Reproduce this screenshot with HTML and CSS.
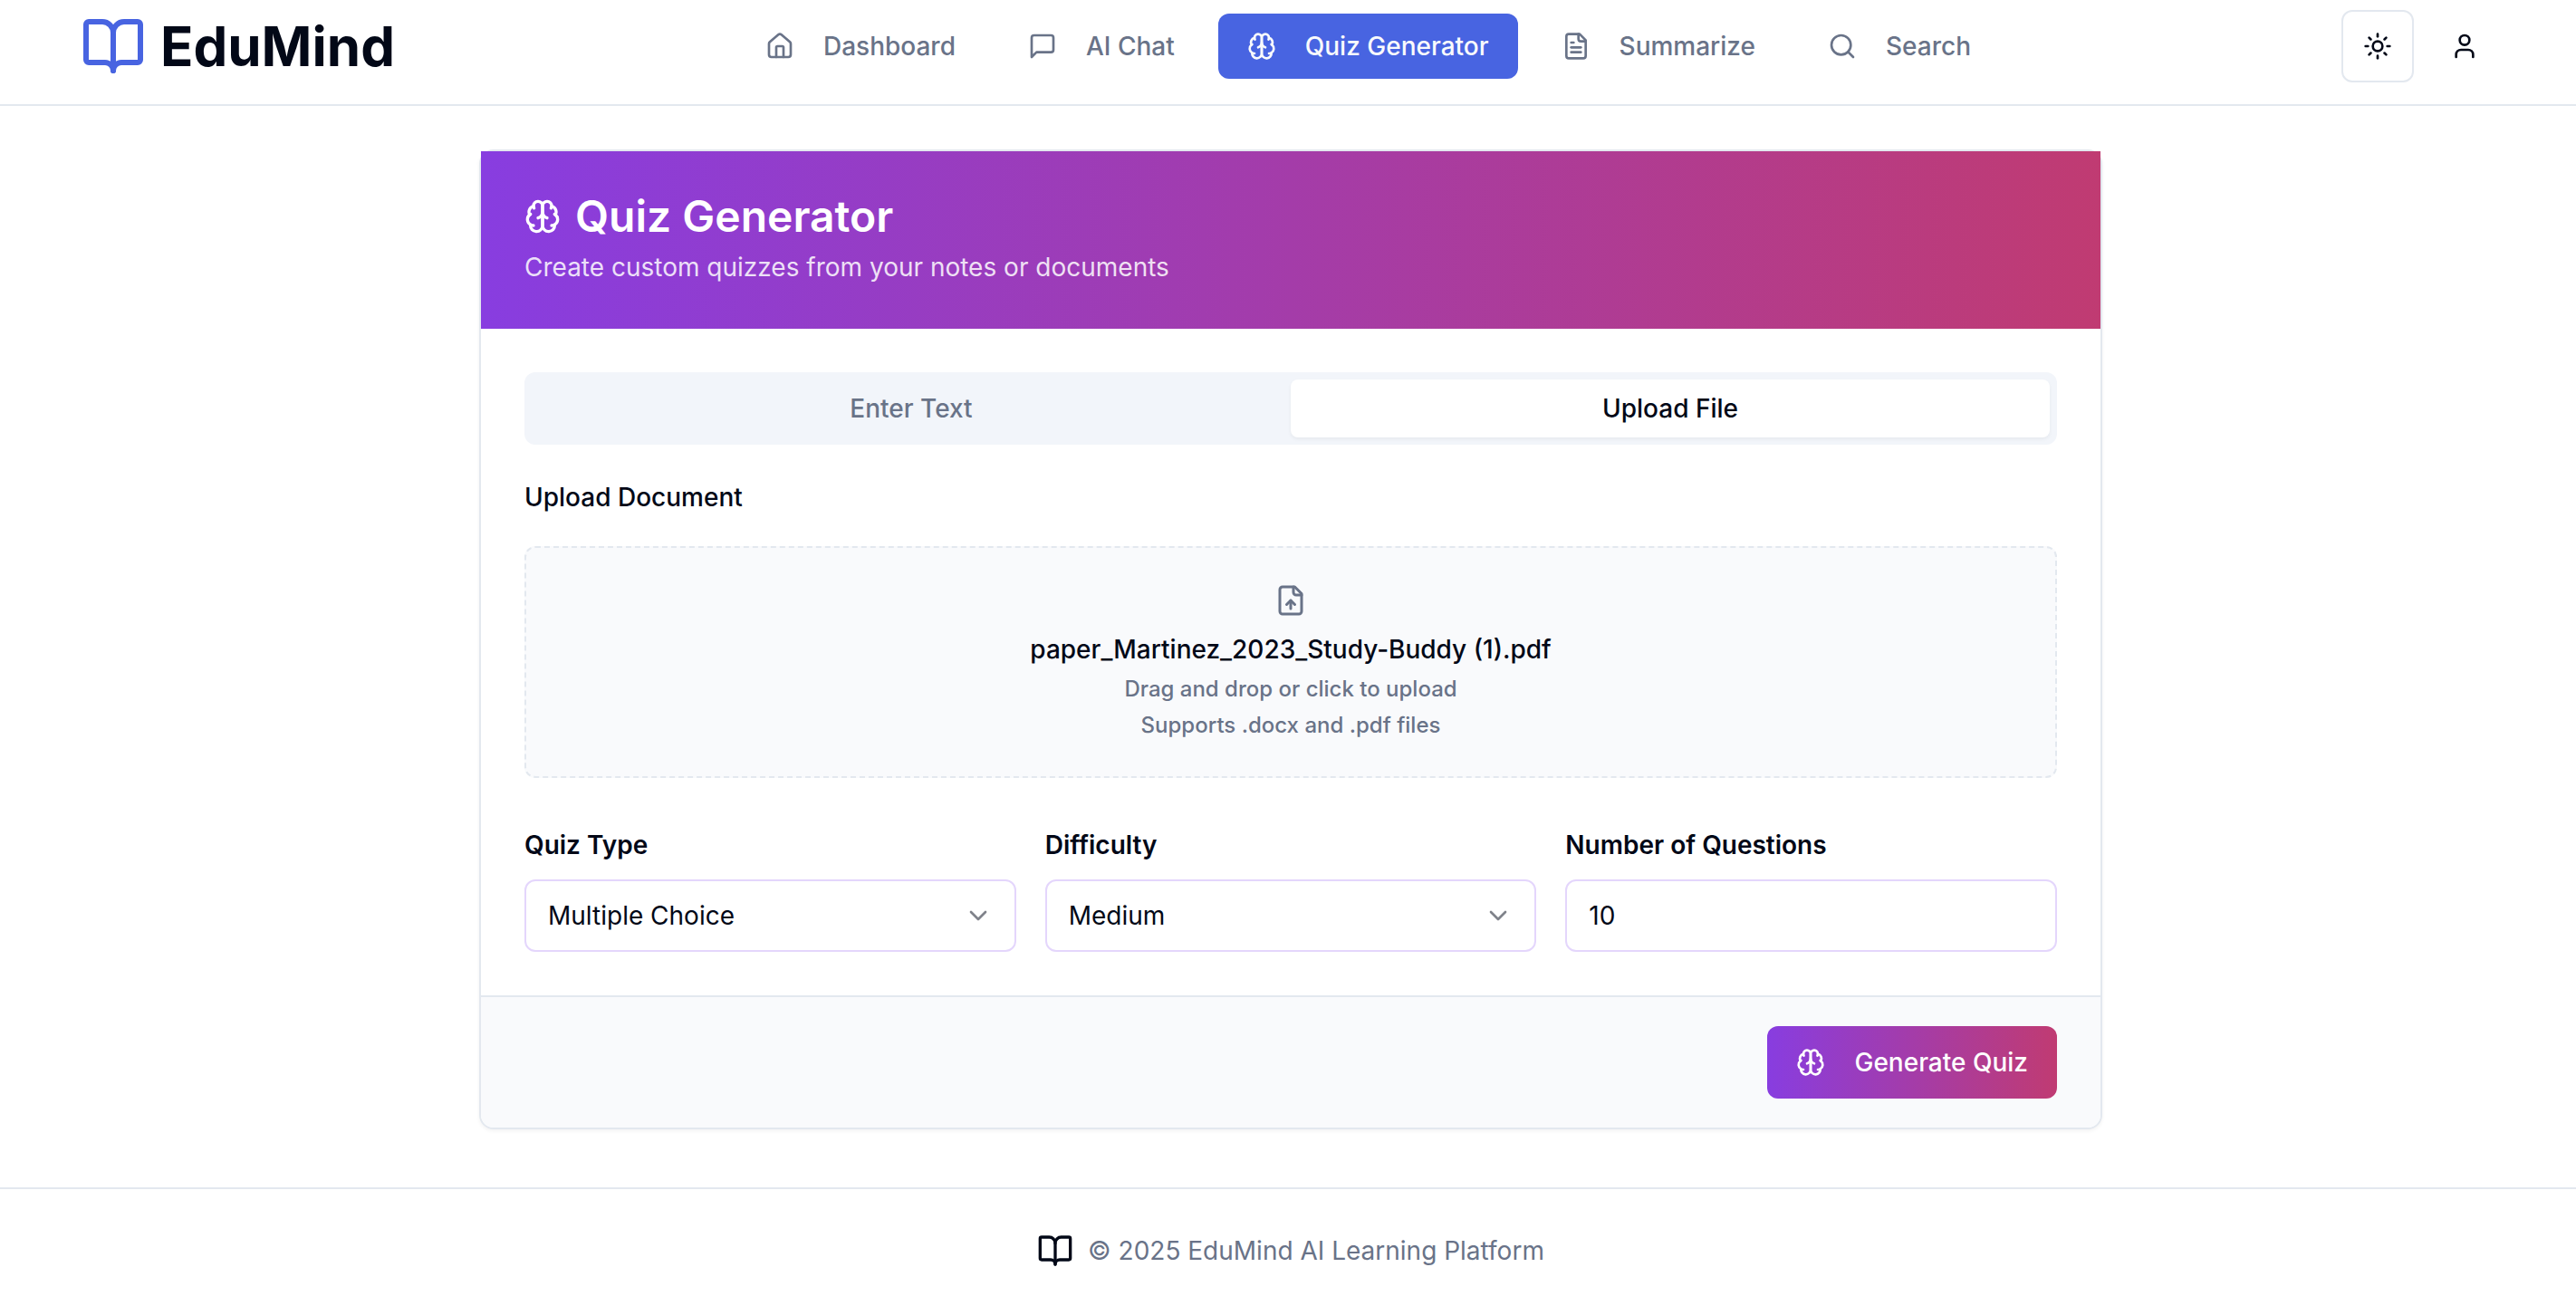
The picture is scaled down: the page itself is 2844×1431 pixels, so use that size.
FILE: index.html
```html
<!DOCTYPE html>
<html lang="en">
<head>
<meta charset="utf-8">
<meta name="viewport" content="width=device-width, initial-scale=1">
<title>EduMind – Quiz Generator</title>
<link rel="stylesheet" href="styles.css">
</head>
<body>
<svg class="sprite" aria-hidden="true">
  <symbol id="book" viewBox="0 0 24 24"><path d="M12 7v14"/><path d="M3 18a1 1 0 0 1-1-1V4a1 1 0 0 1 1-1h5a4 4 0 0 1 4 4 4 4 0 0 1 4-4h5a1 1 0 0 1 1 1v13a1 1 0 0 1-1 1h-6a3 3 0 0 0-3 3 3 3 0 0 0-3-3z"/></symbol>
  <symbol id="brain" viewBox="0 0 24 24"><path d="M12 5a3 3 0 1 0-5.997.125 4 4 0 0 0-2.526 5.77 4 4 0 0 0 .556 6.588A4 4 0 1 0 12 18Z"/><path d="M12 5a3 3 0 1 1 5.997.125 4 4 0 0 1 2.526 5.77 4 4 0 0 1-.556 6.588A4 4 0 1 1 12 18Z"/><path d="M15 13a4.5 4.5 0 0 1-3-4 4.5 4.5 0 0 1-3 4"/><path d="M17.599 6.5a3 3 0 0 0 .399-1.375"/><path d="M6.003 5.125A3 3 0 0 0 6.401 6.5"/><path d="M3.477 10.896a4 4 0 0 1 .585-.396"/><path d="M19.938 10.5a4 4 0 0 1 .585.396"/><path d="M6 18a4 4 0 0 1-1.967-.516"/><path d="M19.967 17.484A4 4 0 0 1 18 18"/></symbol>
  <symbol id="chevron" viewBox="0 0 24 24"><path d="m6 9 6 6 6-6"/></symbol>
</svg>

<header class="site-header">
  <div class="header-inner">
    <a class="brand" href="#">
      <svg class="icon icon-brand"><use href="#book"/></svg>
      <span>EduMind</span>
    </a>
    <nav class="nav" aria-label="Main">
      <a class="nav-link" href="#"><svg class="icon" viewBox="0 0 24 24"><path d="M15 21v-8a1 1 0 0 0-1-1h-4a1 1 0 0 0-1 1v8"/><path d="M3 10a2 2 0 0 1 .709-1.528l7-5.999a2 2 0 0 1 2.582 0l7 5.999A2 2 0 0 1 21 10v9a2 2 0 0 1-2 2H5a2 2 0 0 1-2-2z"/></svg>Dashboard</a>
      <a class="nav-link" href="#"><svg class="icon" viewBox="0 0 24 24"><path d="M21 15a2 2 0 0 1-2 2H7l-4 4V5a2 2 0 0 1 2-2h14a2 2 0 0 1 2 2z"/></svg>AI Chat</a>
      <a class="nav-link is-active" href="#" aria-current="page"><svg class="icon"><use href="#brain"/></svg>Quiz Generator</a>
      <a class="nav-link" href="#"><svg class="icon" viewBox="0 0 24 24"><path d="M15 2H6a2 2 0 0 0-2 2v16a2 2 0 0 0 2 2h12a2 2 0 0 0 2-2V7Z"/><path d="M14 2v4a2 2 0 0 0 2 2h4"/><path d="M10 9H8"/><path d="M16 13H8"/><path d="M16 17H8"/></svg>Summarize</a>
      <a class="nav-link" href="#"><svg class="icon" viewBox="0 0 24 24"><circle cx="11" cy="11" r="8"/><path d="m21 21-4.3-4.3"/></svg>Search</a>
    </nav>
    <div class="actions">
      <button class="icon-button is-outlined" type="button" aria-label="Toggle theme"><svg class="icon" viewBox="0 0 24 24"><circle cx="12" cy="12" r="4"/><path d="M12 2v2"/><path d="M12 20v2"/><path d="m4.93 4.93 1.41 1.41"/><path d="m17.66 17.66 1.41 1.41"/><path d="M2 12h2"/><path d="M20 12h2"/><path d="m6.34 17.66-1.41 1.41"/><path d="m19.07 4.93-1.41 1.41"/></svg></button>
      <button class="icon-button" type="button" aria-label="Account"><svg class="icon" viewBox="0 0 24 24"><path d="M19 21v-2a4 4 0 0 0-4-4H9a4 4 0 0 0-4 4v2"/><circle cx="12" cy="7" r="4"/></svg></button>
    </div>
  </div>
</header>

<main class="main">
  <form class="card">
    <div class="card-header">
      <h1 class="card-title"><svg class="icon icon-large"><use href="#brain"/></svg>Quiz Generator</h1>
      <p class="card-description">Create custom quizzes from your notes or documents</p>
    </div>
    <div class="card-body">
      <div class="tabs" role="tablist">
        <button class="tab" type="button" role="tab" aria-selected="false">Enter Text</button>
        <button class="tab is-selected" type="button" role="tab" aria-selected="true">Upload File</button>
      </div>
      <div class="upload">
        <label class="upload-label" for="document">Upload Document</label>
        <label class="dropzone">
          <input class="file-input" id="document" type="file" accept=".docx,.pdf">
          <svg class="icon icon-file" viewBox="0 0 24 24"><path d="M15 2H6a2 2 0 0 0-2 2v16a2 2 0 0 0 2 2h12a2 2 0 0 0 2-2V7Z"/><path d="M14 2v4a2 2 0 0 0 2 2h4"/><path d="M12 12v6"/><path d="m15 15-3-3-3 3"/></svg>
          <span class="file-name">paper_Martinez_2023_Study-Buddy (1).pdf</span>
          <span class="hint">Drag and drop or click to upload</span>
          <span class="hint">Supports .docx and .pdf files</span>
        </label>
      </div>
      <div class="fields">
        <div class="field">
          <label class="field-label" for="quiz-type">Quiz Type</label>
          <div class="select">
            <select class="control" id="quiz-type"><option>Multiple Choice</option><option>True / False</option></select>
            <svg class="icon select-arrow"><use href="#chevron"/></svg>
          </div>
        </div>
        <div class="field">
          <label class="field-label" for="difficulty">Difficulty</label>
          <div class="select">
            <select class="control" id="difficulty"><option>Easy</option><option selected>Medium</option><option>Hard</option></select>
            <svg class="icon select-arrow"><use href="#chevron"/></svg>
          </div>
        </div>
        <div class="field">
          <label class="field-label" for="count">Number of Questions</label>
          <input class="control" id="count" type="number" min="1" value="10">
        </div>
      </div>
    </div>
    <div class="card-footer">
      <button class="generate" type="submit"><svg class="icon"><use href="#brain"/></svg>Generate Quiz</button>
    </div>
  </form>
</main>

<footer class="site-footer">
  <svg class="icon icon-large"><use href="#book"/></svg>
  <p class="copyright">© 2025 EduMind AI Learning Platform</p>
</footer>
</body>
</html>
```
FILE: styles.css
```css
:root {
  --ink: #020817;
  --muted: #697388;
  --line: #e3e8ef;
  --soft: #f9fafc;
  --primary: #4864e1;
  --gradient: linear-gradient(to right, #883de0, #c03b72);
  --shell-inset: 6px;
}

*, *::before, *::after { box-sizing: border-box; }

body {
  margin: 0;
  background: #fff;
  color: var(--ink);
  font-family: Inter, "Liberation Sans", sans-serif;
  font-size: 28px;
  line-height: 40px;
}

h1, p { margin: 0; }
a { color: inherit; text-decoration: none; }
button, input, select { font: inherit; color: inherit; }
button { cursor: pointer; }

.sprite { display: none; }

.icon {
  flex: none;
  width: 32px;
  height: 32px;
  fill: none;
  stroke: currentColor;
  stroke-width: 2;
  stroke-linecap: round;
  stroke-linejoin: round;
}
.icon-brand { width: 72px; height: 72px; color: var(--primary); }
.icon-large { width: 40px; height: 40px; }
.icon-file { width: 36px; height: 36px; margin-bottom: 8px; color: var(--muted); }

/* Header */
.site-header {
  padding: 11px 0 24px var(--shell-inset);
  border-bottom: 2px solid var(--line);
}
.header-inner {
  display: flex;
  align-items: center;
  justify-content: space-between;
  max-width: 2800px;
  margin: 0 auto;
  padding: 0 64px;
}
.brand {
  display: flex;
  align-items: center;
  gap: 16px;
  font-size: 60px;
  font-weight: 700;
}
.nav { display: flex; gap: 16px; }
.nav-link {
  display: flex;
  align-items: center;
  gap: 32px;
  padding: 16px 32px;
  border-radius: 12px;
  color: var(--muted);
  font-weight: 500;
}
.nav-link.is-active { background: var(--primary); color: var(--soft); }
.actions { display: flex; gap: 16px; }
.icon-button {
  display: grid;
  place-items: center;
  width: 80px;
  height: 80px;
  padding: 0;
  border: 2px solid transparent;
  border-radius: 12px;
  background: none;
}
.icon-button.is-outlined { border-color: var(--line); }

/* Quiz card */
.main { padding: 48px 0 64px var(--shell-inset); }
.card {
  max-width: 1792px;
  margin: 0 auto;
  border: 2px solid var(--line);
  border-radius: 16px;
  background: #fff;
  box-shadow: 0 2px 4px rgb(0 0 0 / 5%);
}
.card-header {
  display: grid;
  gap: 12px;
  padding: 48px;
  background: var(--gradient);
  color: #fff;
}
.card-title {
  display: flex;
  align-items: center;
  gap: 16px;
  font-size: 48px;
  font-weight: 600;
  line-height: 48px;
}
.card-description { color: rgb(255 255 255 / 85%); }
.card-body { padding: 48px; }

.tabs {
  display: grid;
  grid-template-columns: 1fr 1fr;
  padding: 8px;
  border-radius: 12px;
  background: #f2f5fa;
}
.tab {
  padding: 12px 24px;
  border: 0;
  border-radius: 8px;
  background: none;
  color: var(--muted);
  font-weight: 500;
}
.tab.is-selected {
  background: #fff;
  color: var(--ink);
  box-shadow: 0 2px 4px rgb(0 0 0 / 5%);
}

.upload { display: grid; gap: 34px; padding: 38px 0 54px; }
.upload-label { justify-self: start; font-weight: 500; }
.dropzone {
  display: flex;
  flex-direction: column;
  align-items: center;
  gap: 8px;
  padding: 40px;
  border: 2px dashed var(--line);
  border-radius: 12px;
  background: var(--soft);
  font-weight: 500;
  cursor: pointer;
}
.file-input {
  position: absolute;
  width: 1px;
  height: 1px;
  opacity: 0;
}
.hint { color: var(--muted); font-size: 24px; line-height: 32px; }

.fields {
  display: grid;
  grid-template-columns: repeat(3, 1fr);
  gap: 32px;
}
.field { display: grid; gap: 18px; }
.field-label { font-weight: 600; }
.select { display: grid; align-items: center; }
.select > * { grid-area: 1 / 1; }
.select-arrow {
  justify-self: end;
  margin-right: 26px;
  opacity: 0.5;
  pointer-events: none;
}
.control {
  appearance: none;
  width: 100%;
  height: 80px;
  padding: 0 24px;
  border: 2px solid #e4d6fc;
  border-radius: 12px;
  background: #fff;
}

.card-footer {
  display: flex;
  justify-content: flex-end;
  padding: 32px 48px;
  border-top: 2px solid var(--line);
  border-radius: 0 0 14px 14px;
  background: var(--soft);
}
.generate {
  display: flex;
  align-items: center;
  gap: 32px;
  padding: 20px 32px;
  border: 0;
  border-radius: 12px;
  background: var(--gradient);
  color: #fff;
  font-weight: 500;
}

/* Footer */
.site-footer {
  display: flex;
  align-items: center;
  justify-content: center;
  gap: 16px;
  padding: 48px 0 30px var(--shell-inset);
  border-top: 2px solid var(--line);
}
.copyright { color: var(--muted); }
```
